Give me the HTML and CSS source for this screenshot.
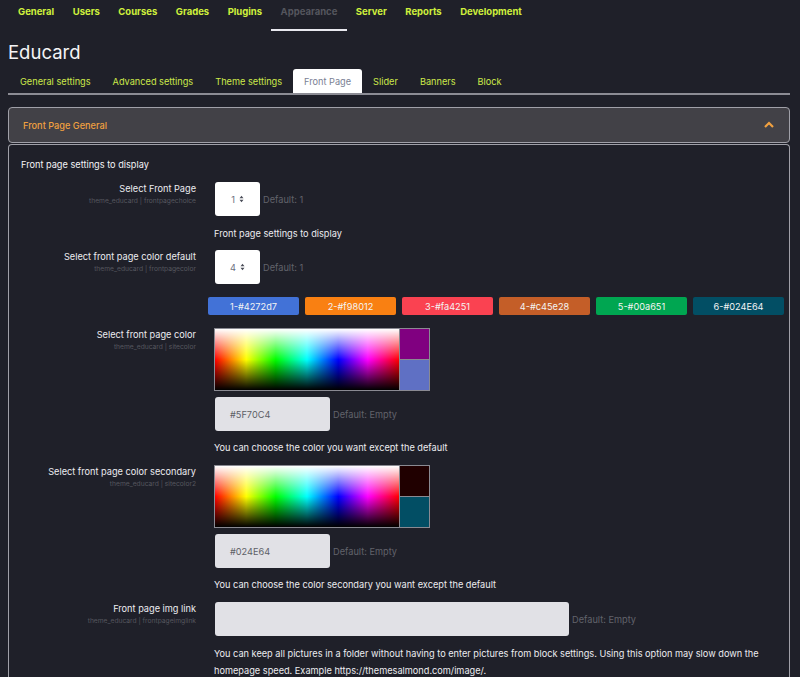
FILE: index.html
```html
<!DOCTYPE html>
<html lang="en">
<head>
<meta charset="utf-8">
<title>Educard</title>
<link rel="stylesheet" href="styles.css">
</head>
<body>
<nav class="topnav">
  <a class="nav-item">General</a>
  <a class="nav-item">Users</a>
  <a class="nav-item">Courses</a>
  <a class="nav-item">Grades</a>
  <a class="nav-item">Plugins</a>
  <a class="nav-item active">Appearance</a>
  <a class="nav-item">Server</a>
  <a class="nav-item">Reports</a>
  <a class="nav-item">Development</a>
</nav>
<h1 class="title">Educard</h1>
<div class="tabs">
  <a class="tab">General settings</a>
  <a class="tab">Advanced settings</a>
  <a class="tab">Theme settings</a>
  <a class="tab active">Front Page</a>
  <a class="tab">Slider</a>
  <a class="tab">Banners</a>
  <a class="tab">Block</a>
</div>
<section class="card">
  <div class="card-header">
    <span class="card-title">Front Page General</span>
    <svg class="chevron" width="10" height="7" viewBox="0 0 10 7"><path d="M1 6 L5 2 L9 6" fill="none" stroke="#f0a040" stroke-width="2.2"/></svg>
  </div>
  <div class="card-body">
    <div class="heading">Front page settings to display</div>
    <div class="form-grid">
      <div class="label"><div class="lbl">Select Front Page</div><div class="sub">theme_educard | frontpagechoice</div></div>
      <div class="control">
        <div class="line"><div class="select">1<svg class="arrows" width="5" height="8" viewBox="0 0 5 8"><path d="M0.5 3.2 L2.5 0.8 L4.5 3.2 Z M0.5 4.8 L2.5 7.2 L4.5 4.8 Z" fill="#4a4d58"/></svg></div><span class="def">Default: 1</span></div>
        <div class="desc first">Front page settings to display</div>
      </div>

      <div class="label"><div class="lbl">Select front page color default</div><div class="sub">theme_educard | frontpagecolor</div></div>
      <div class="control">
        <div class="line"><div class="select">4<svg class="arrows" width="5" height="8" viewBox="0 0 5 8"><path d="M0.5 3.2 L2.5 0.8 L4.5 3.2 Z M0.5 4.8 L2.5 7.2 L4.5 4.8 Z" fill="#4a4d58"/></svg></div><span class="def">Default: 1</span></div>
        <div class="swatches">
          <span class="sw sw1">1-#4272d7</span>
          <span class="sw sw2">2-#f98012</span>
          <span class="sw sw3">3-#fa4251</span>
          <span class="sw sw4">4-#c45e28</span>
          <span class="sw sw5">5-#00a651</span>
          <span class="sw sw6">6-#024E64</span>
        </div>
      </div>

      <div class="label"><div class="lbl">Select front page color</div><div class="sub">theme_educard | sitecolor</div></div>
      <div class="control">
        <div class="picker"><div class="spectrum"></div><div class="preview"><div class="prev-top purple"></div><div class="prev-bot blue"></div></div></div>
        <div class="line"><div class="text-input">#5F70C4</div><span class="def">Default: Empty</span></div>
        <div class="desc">You can choose the color you want except the default</div>
      </div>

      <div class="label"><div class="lbl">Select front page color secondary</div><div class="sub">theme_educard | sitecolor2</div></div>
      <div class="control">
        <div class="picker"><div class="spectrum"></div><div class="preview"><div class="prev-top darkred"></div><div class="prev-bot teal"></div></div></div>
        <div class="line"><div class="text-input">#024E64</div><span class="def">Default: Empty</span></div>
        <div class="desc">You can choose the color secondary you want except the default</div>
      </div>

      <div class="label"><div class="lbl">Front page img link</div><div class="sub">theme_educard | frontpageimglink</div></div>
      <div class="control">
        <div class="line"><div class="text-input wide"></div><span class="def">Default: Empty</span></div>
        <div class="desc last">You can keep all pictures in a folder without having to enter pictures from block settings. Using this option may slow down the homepage speed. Example https://themesalmond.com/image/.</div>
      </div>
    </div>
  </div>
</section>
</body>
</html>
```

FILE: styles.css
```css
html, body {
  margin: 0;
  padding: 0;
}
body {
  background: #1f2029;
  color: #e6e6ea;
  font-family: "Inter", "Roboto", "Liberation Sans", sans-serif;
  font-size: 9.2px;
  padding: 0 10px 0 8px;
  overflow: hidden;
  height: 677px;
}
a { text-decoration: none; }

.topnav {
  display: flex;
  height: 31px;
}
.nav-item {
  display: flex;
  align-items: flex-start;
  box-sizing: border-box;
  height: 31px;
  padding: 6px 9.25px 0 9.25px;
  font-size: 9.5px;
  line-height: 12px;
  font-weight: 700;
  color: #cff03c;
  border-bottom: 2px solid transparent;
}
.nav-item:first-child { padding-left: 10px; }
.nav-item.active {
  color: #55565e;
  border-bottom-color: #e8e8ee;
}

.title {
  font-weight: 400;
  font-size: 18.5px;
  margin: 10px 0 6px 0;
  line-height: 22px;
  color: #f4f4f6;
}

.tabs {
  display: flex;
  border-bottom: 2px solid #8c8c94;
  padding-left: 1px;
}
.tab {
  padding: 0 11px;
  height: 24px;
  display: flex;
  align-items: center;
  color: #cde94a;
}
.tab.active {
  background: #ffffff;
  color: #7a8194;
  border-radius: 3px 3px 0 0;
}

.card {
  margin-top: 12px;
}
.card-header {
  display: flex;
  align-items: center;
  justify-content: space-between;
  height: 34px;
  background: #424147;
  border: 1px solid #a0a0a8;
  border-radius: 4px;
  padding: 0 14px 0 14px;
}
.card-title {
  color: #f0a040;
  font-weight: 500;
}
.chevron { display: block; margin-right: 1px; margin-bottom: 2px; }

.card-body {
  margin-top: 1px;
  border: 1px solid #a0a0a8;
  border-bottom: none;
  border-radius: 4px 4px 0 0;
  padding: 13px 6px 0 12px;
}
.heading {
  color: #f4f4f6;
  line-height: 13px;
  margin-bottom: 11px;
}
.form-grid {
  display: grid;
  grid-template-columns: 175px 1fr;
  column-gap: 18px;
}
.label {
  text-align: right;
  padding-top: 1px;
}
.lbl {
  color: #ececf0;
  line-height: 12px;
}
.sub {
  color: #56575f;
  font-size: 6.7px;
  line-height: 12px;
}
.control {
  display: flex;
  flex-direction: column;
  align-items: flex-start;
}
.line {
  display: flex;
  align-items: center;
}
.select {
  width: 45px;
  height: 34px;
  background: #ffffff;
  border-radius: 3px;
  color: #6b6f80;
  display: flex;
  align-items: center;
  justify-content: center;
  box-sizing: border-box;
  margin-left: 1px;
}
.arrows {
  display: block;
  margin-left: 4px;
}
.def {
  color: #62636b;
  margin-left: 3px;
}
.desc {
  line-height: 17px;
  margin: 8px 0 9px 0;
  color: #ececf0;
}
.desc.first { margin: 9px 0 8px 0; }
.desc.last { margin-top: 9px; }
.swatches {
  display: flex;
  gap: 6px;
  margin: 13px 0 13px -6px;
}
.sw {
  width: 91px;
  height: 18px;
  border-radius: 2px;
  color: #f4f4f4;
  display: flex;
  align-items: center;
  justify-content: center;
}
.sw1 { background: #4272d7; }
.sw2 { background: #f98012; }
.sw3 { background: #fa4251; }
.sw4 { background: #c45e28; }
.sw5 { background: #00a651; }
.sw6 { background: #024e64; }

.picker {
  display: flex;
  border: 1px solid #8a8a92;
  margin-bottom: 6px;
}
.spectrum {
  width: 184px;
  height: 61px;
  background:
    linear-gradient(to bottom, #ffffff 0%, rgba(255,255,255,0) 50%, rgba(0,0,0,0) 50%, #000000 100%),
    linear-gradient(to right, #ff0000, #ffff00 17%, #00ff00 33%, #00ffff 50%, #0000ff 67%, #ff00ff 83%, #ff0000);
}
.preview {
  width: 29px;
  display: flex;
  flex-direction: column;
  border-left: 1px solid #8a8a92;
}
.prev-top { flex: 1; }
.prev-bot { flex: 1; border-top: 1px solid #8a8a92; }
.purple { background: #800080; }
.blue { background: #5f70c4; }
.darkred { background: #200000; }
.teal { background: #024e64; }

.text-input {
  width: 115px;
  height: 34px;
  box-sizing: border-box;
  background: #e1e1e6;
  border-radius: 3px;
  color: #5e5f66;
  display: flex;
  align-items: center;
  padding-left: 15px;
  margin-left: 1px;
}
.text-input.wide {
  width: 354px;
}
```
